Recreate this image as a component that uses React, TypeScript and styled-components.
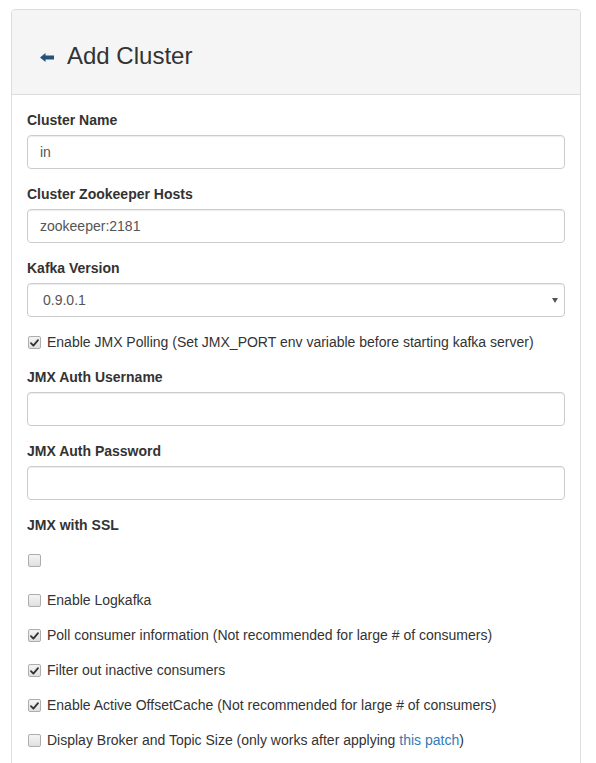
import React from "react";
import styled, { createGlobalStyle } from "styled-components";

const GlobalStyle = createGlobalStyle`
  html, body { margin: 0; padding: 0; background: #fff; }
  body {
    font-family: "Liberation Sans", Arial, Helvetica, sans-serif;
    font-size: 14px;
    line-height: 20px;
    color: #333;
  }
  * { box-sizing: border-box; }
`;

const Page = styled.div`
  padding: 9px 15px 0 11px;
`;

const Panel = styled.div`
  width: 570px;
  border: 1px solid #ddd;
  border-radius: 4px;
  background: #fff;
  overflow: hidden;
`;

const PanelHeading = styled.div`
  background: #f5f5f5;
  border-bottom: 1px solid #ddd;
  padding: 33px 15px 25px 28px;
`;

const Title = styled.h3`
  margin: 0;
  font-size: 24px;
  font-weight: 500;
  line-height: 26px;
  color: #333;
  display: flex;
  align-items: center;
  gap: 13px;
`;

const BackLink = styled.a`
  display: inline-flex;
  align-items: center;
  color: #23527c;
  height: 26px;
  padding-top: 3px;
`;

const PanelBody = styled.div`
  padding: 15px 15px 20px 15px;
`;

const FormGroup = styled.div<{ $mb?: number }>`
  margin-bottom: ${(p) => (p.$mb ?? 15)}px;
`;

const Label = styled.label`
  display: block;
  font-weight: bold;
  margin-bottom: 5px;
  line-height: 20px;
`;

const Input = styled.input`
  display: block;
  width: 100%;
  height: 34px;
  padding: 6px 12px;
  font-family: inherit;
  font-size: 14px;
  line-height: 20px;
  color: #555;
  background: #fff;
  border: 1px solid #ccc;
  border-radius: 4px;
  box-shadow: inset 0 1px 1px rgba(0, 0, 0, 0.075);
  outline: none;
`;

const SelectWrap = styled.div`
  position: relative;
`;

const Select = styled.select`
  display: block;
  width: 100%;
  height: 34px;
  padding: 6px 12px 6px 15px;
  font-family: inherit;
  font-size: 14px;
  line-height: 20px;
  color: #555;
  background: #fff;
  border: 1px solid #ccc;
  border-radius: 4px;
  box-shadow: inset 0 1px 1px rgba(0, 0, 0, 0.075);
  appearance: none;
  -webkit-appearance: none;
  outline: none;
`;

const Caret = styled.span`
  position: absolute;
  right: 7px;
  top: 15px;
  width: 0;
  height: 0;
  border-left: 3px solid transparent;
  border-right: 3px solid transparent;
  border-top: 5px solid #555;
  pointer-events: none;
`;

const CheckRow = styled.label<{ $mt?: number; $mb?: number }>`
  display: flex;
  align-items: flex-start;
  height: 20px;
  line-height: 20px;
  margin-top: ${(p) => p.$mt ?? 0}px;
  margin-bottom: ${(p) => p.$mb ?? 15}px;
  font-weight: normal;
  cursor: pointer;
`;

const Box = styled.span`
  flex: none;
  width: 13px;
  height: 13px;
  margin: 4px 6px 0 1px;
  border: 1px solid #adadad;
  border-radius: 2px;
  background: linear-gradient(#f4f4f4, #e0e0e0);
  display: flex;
  align-items: center;
  justify-content: center;
`;

const Link = styled.a`
  color: #337ab7;
  text-decoration: none;
`;

function Check({ checked, children, mt, mb }: { checked?: boolean; children?: React.ReactNode; mt?: number; mb?: number }) {
  return (
    <CheckRow $mt={mt} $mb={mb}>
      <Box>
        {checked && (
          <svg width="9" height="8" viewBox="0 0 9 8">
            <path d="M1 4.2 L3.4 6.6 L8 1.2" fill="none" stroke="#333" strokeWidth="1.8" strokeLinecap="round" strokeLinejoin="round" />
          </svg>
        )}
      </Box>
      <span>{children}</span>
    </CheckRow>
  );
}

export default function App() {
  return (
    <>
      <GlobalStyle />
      <Page>
        <Panel>
          <PanelHeading>
            <Title>
              <BackLink href="#">
                <svg width="14" height="9" viewBox="0 0 14 9">
                  <path d="M0 4.5 L5.5 0 L5.5 2.6 L14 2.6 L14 6.4 L5.5 6.4 L5.5 9 Z" fill="currentColor" />
                </svg>
              </BackLink>
              Add Cluster
            </Title>
          </PanelHeading>
          <PanelBody>
            <FormGroup>
              <Label>Cluster Name</Label>
              <Input defaultValue="in" />
            </FormGroup>
            <FormGroup>
              <Label>Cluster Zookeeper Hosts</Label>
              <Input defaultValue="zookeeper:2181" />
            </FormGroup>
            <FormGroup>
              <Label>Kafka Version</Label>
              <SelectWrap>
                <Select defaultValue="0.9.0.1">
                  <option>0.9.0.1</option>
                </Select>
                <Caret />
              </SelectWrap>
            </FormGroup>
            <Check checked>Enable JMX Polling (Set JMX_PORT env variable before starting kafka server)</Check>
            <FormGroup>
              <Label>JMX Auth Username</Label>
              <Input />
            </FormGroup>
            <FormGroup>
              <Label>JMX Auth Password</Label>
              <Input type="password" />
            </FormGroup>
            <FormGroup $mb={20}>
              <Label>JMX with SSL</Label>
              <Check mt={15} mb={0} />
            </FormGroup>
            <Check>Enable Logkafka</Check>
            <Check checked>Poll consumer information (Not recommended for large # of consumers)</Check>
            <Check checked>Filter out inactive consumers</Check>
            <Check checked>Enable Active OffsetCache (Not recommended for large # of consumers)</Check>
            <Check>
              Display Broker and Topic Size (only works after applying <Link href="#">this patch</Link>)
            </Check>
          </PanelBody>
        </Panel>
      </Page>
    </>
  );
}
